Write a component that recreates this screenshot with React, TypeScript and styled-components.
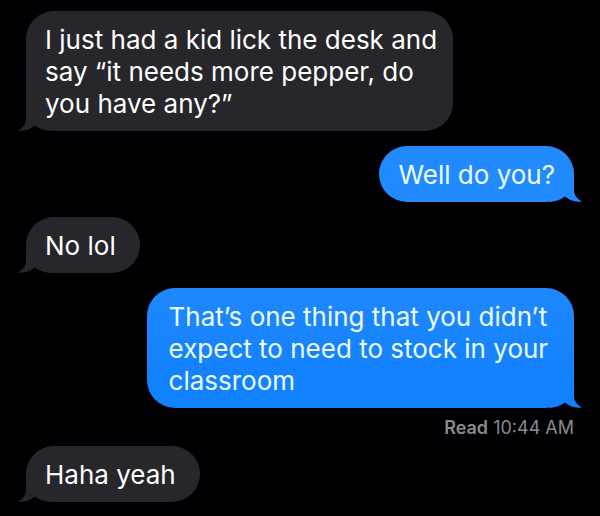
import React from "react";
import styled, { createGlobalStyle, css } from "styled-components";

const GlobalStyle = createGlobalStyle`
  * { box-sizing: border-box; }
  body {
    margin: 0;
    background: #000003;
    font-family: Inter, "Liberation Sans", sans-serif;
  }
`;

type Tone = "grey" | "sky" | "blue";

const tones: Record<Tone, { top: string; bottom: string }> = {
  grey: { top: "#27262b", bottom: "#27262b" },
  sky: { top: "#218aff", bottom: "#218aff" },
  blue: { top: "#1f88fe", bottom: "#1281ff" },
};

const Thread = styled.main`
  display: flex;
  flex-direction: column;
  gap: 15px;
  padding: 11px 26px 14px;
`;

const Bubble = styled.div<{ $tone: Tone; $long: boolean }>`
  position: relative;
  max-width: 78%;
  border-radius: 28px;
  background: linear-gradient(
    ${({ $tone }) => `${tones[$tone].top}, ${tones[$tone].bottom} 80%`}
  );
  ${({ $tone, $long }) =>
    $tone === "grey"
      ? css`
          align-self: flex-start;
          padding: 13px ${$long ? 12 : 24}px 11px 19px;
          color: #fff;
        `
      : css`
          align-self: flex-end;
          padding: 13px 19px 11px ${$long ? 22 : 19}px;
          color: #ecfdff;
        `}
`;

const Words = styled.p`
  position: relative;
  margin: 0;
  font-size: 26px;
  line-height: 32px;
`;

const TailShape = styled.svg<{ $tone: Tone }>`
  position: absolute;
  bottom: 0;
  width: 32px;
  height: 30px;
  fill: ${({ $tone }) => tones[$tone].bottom};
  ${({ $tone }) =>
    $tone === "grey"
      ? css`
          left: -8px;
        `
      : css`
          right: -8px;
          transform: scaleX(-1);
        `}
`;

const Receipt = styled.div`
  align-self: flex-end;
  margin: -6px 0 -8px;
  color: #8a8a8f;
  font-size: 18px;
  line-height: 22px;
`;

const ReadLabel = styled.span`
  font-weight: 600;
`;

function Message({ tone, long = false, children }: { tone: Tone; long?: boolean; children: string }) {
  return (
    <Bubble $tone={tone} $long={long}>
      <TailShape $tone={tone} viewBox="0 0 32 30" aria-hidden="true">
        <path d="M8 2 L8 18 C8 23 5 27 0 29.5 C7 30.5 13 28 17 24.5 C21 27.5 26 29.5 32 30 L32 2 Z" />
      </TailShape>
      <Words>{children}</Words>
    </Bubble>
  );
}

export default function App() {
  return (
    <>
      <GlobalStyle />
      <Thread>
        <Message tone="grey" long>
          I just had a kid lick the desk and say “it needs more pepper, do you have any?”
        </Message>
        <Message tone="sky">Well do you?</Message>
        <Message tone="grey">No lol</Message>
        <Message tone="blue" long>
          That’s one thing that you didn’t expect to need to stock in your classroom
        </Message>
        <Receipt>
          <ReadLabel>Read</ReadLabel> <time>10:44 AM</time>
        </Receipt>
        <Message tone="grey">Haha yeah</Message>
      </Thread>
    </>
  );
}
